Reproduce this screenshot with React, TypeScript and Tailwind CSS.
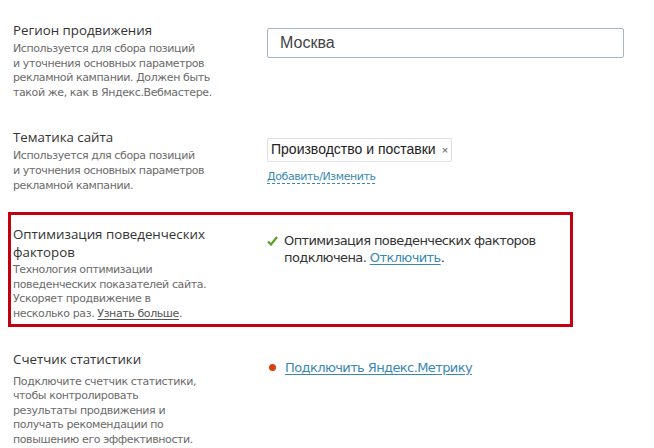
import React from 'react';

const titleFont = { fontFamily: '"Open Sans", "Noto Sans", sans-serif' };

const Row: React.FC<{
  title: React.ReactNode;
  desc: React.ReactNode;
  right: React.ReactNode;
  highlight?: boolean;
  className?: string;
  descClass?: string;
}> = ({ title, desc, right, highlight, className, descClass }) => (
  <div
    className={
      'flex w-[565px] border-[3px] px-[2px] pt-[10px] pb-[2px] ' +
      (highlight ? 'border-[#c3000f] ' : 'border-transparent ') +
      (className ?? '')
    }
  >
    <div className="w-[254px] shrink-0">
      <div className="text-[13.3px] leading-[18px] text-[#333]" style={titleFont}>
        {title}
      </div>
      <div
        className={
          'whitespace-nowrap font-["DejaVu_Sans",sans-serif] text-[11px] leading-[14.6px] tracking-[-0.4px] text-[#6b6b6b] ' +
          (descClass ?? 'mt-[3px]')
        }
      >
        {desc}
      </div>
    </div>
    <div className="flex-1">{right}</div>
  </div>
);

export default function App() {
  return (
    <div className="min-h-[448px] w-[654px] bg-white pl-[8px] pt-[8px]">
      <Row
        title="Регион продвижения"
        desc={
          <>
            Используется для сбора позиций
            <br />и уточнения основных параметров
            <br />рекламной кампании. Должен быть
            <br />такой же, как в Яндекс.Вебмастере.
          </>
        }
        right={
          <div className="mt-[7px] flex h-[30px] w-[357px] items-center rounded-[2px] border border-[#a7b5c1] px-[12px] font-['Liberation_Sans',sans-serif] text-[16px] text-[#444]">
            Москва
          </div>
        }
      />
      <Row
        className="mt-[10px]"
        title="Тематика сайта"
        desc={
          <>
            Используется для сбора позиций
            <br />и уточнения основных параметров
            <br />рекламной кампании.
          </>
        }
        right={
          <div className="mt-[9px] font-['Liberation_Sans',sans-serif]">
            <div className="inline-flex h-[24px] items-center gap-[6px] rounded-[2px] border border-[#e0e0e0] px-[3px] text-[14px] text-[#222]">
              Производство и поставки
              <span className="text-[11px] text-[#555]">×</span>
            </div>
            <div className="mt-[1px]">
              <a className="font-['DejaVu_Sans',sans-serif] text-[11px] tracking-[-0.4px] text-[#3a88b2] underline decoration-dashed underline-offset-[3px]">
                Добавить/Изменить
              </a>
            </div>
          </div>
        }
      />
      <Row
        highlight
        className="mt-[14px]"
        descClass="mt-[2px]"
        title={
          <>
            Оптимизация поведенческих
            <br />
            факторов
          </>
        }
        desc={
          <>
            Технология оптимизации
            <br />
            поведенческих показателей сайта.
            <br />
            Ускоряет продвижение в
            <br />
            несколько раз.{' '}
            <a className="text-[#555] underline underline-offset-2">Узнать больше</a>.
          </>
        }
        right={
          <div className="mt-[7px] flex gap-[6px] font-['DejaVu_Sans',sans-serif] text-[13px] leading-[17px] tracking-[-0.6px] text-[#333]">
            <svg width="11" height="10" viewBox="0 0 11 10" className="mt-[4px] shrink-0">
              <path d="M1 5.5 L4 8.5 L10 1" fill="none" stroke="#5b9f2b" strokeWidth="2.2" />
            </svg>
            <div>
              Оптимизация поведенческих факторов
              <br />
              подключена.{' '}
              <a className="text-[#3a88b2] underline underline-offset-2">Отключить</a>.
            </div>
          </div>
        }
      />
      <Row
        className="mt-[10px]"
        descClass="mt-[7px]"
        title="Счетчик статистики"
        desc={
          <>
            Подключите счетчик статистики,
            <br />
            чтобы контролировать
            <br />
            результаты продвижения и
            <br />
            получать рекомендации по
            <br />
            повышению его эффективности.
          </>
        }
        right={
          <div className="mt-[8px] flex items-center gap-[9px] font-['DejaVu_Sans',sans-serif] text-[13px] tracking-[-0.6px] text-[#3a88b2]">
            <span className="ml-[2px] h-[7px] w-[7px] rounded-full bg-[#d9400f]" />
            <a className="underline underline-offset-2">Подключить Яндекс.Метрику</a>
          </div>
        }
      />
    </div>
  );
}
